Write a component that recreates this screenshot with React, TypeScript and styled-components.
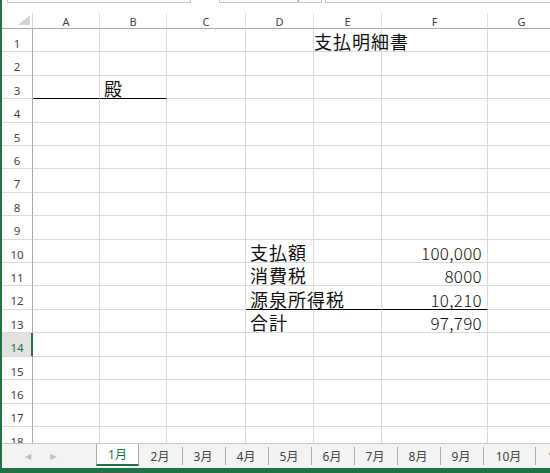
import React from 'react'
import styled, { createGlobalStyle } from 'styled-components'

const GlobalStyle = createGlobalStyle`
	html, body {
		margin: 0;
		padding: 0;
		background: #ffffff;
	}
`

const COLS = ['A', 'B', 'C', 'D', 'E', 'F', 'G']
const COL_WIDTHS = [67, 67, 79, 68, 68, 106, 68]
const ROW_COUNT = 18
const ROW_H = 23.42
const SELECTED_ROW = 14

type CellData = { text: string; align?: 'left' | 'right'; kind?: 'title' | 'label' | 'num' }

const cells: Record<string, CellData> = {
	E1: { text: '支払明細書', kind: 'title' },
	B3: { text: '殿', kind: 'label' },
	D10: { text: '支払額', kind: 'label' },
	F10: { text: '100,000', align: 'right', kind: 'num' },
	D11: { text: '消費税', kind: 'label' },
	F11: { text: '8000', align: 'right', kind: 'num' },
	D12: { text: '源泉所得税', kind: 'label' },
	F12: { text: '10,210', align: 'right', kind: 'num' },
	D13: { text: '合計', kind: 'label' },
	F13: { text: '97,790', align: 'right', kind: 'num' },
}

const underlined = new Set(['A3', 'B3', 'D12', 'E12', 'F12'])

const tabs = ['1月', '2月', '3月', '4月', '5月', '6月', '7月', '8月', '9月', '10月', '11月']

const App = () => {
	const rows = Array.from({ length: ROW_COUNT }, (_, i) => i + 1)

	return (
		<Root>
			<GlobalStyle />
			<TopStrip>
				<NameBox />
				<FnBox>
					<FnGlyph>ƒ</FnGlyph>
				</FnBox>
				<FormulaBox />
			</TopStrip>
			<Sheet>
				<Grid>
					<Corner>
						<svg width="12" height="10" viewBox="0 0 12 10">
							<polygon points="12,0 12,10 0,10" fill="#d6d6d6" />
						</svg>
					</Corner>
					{COLS.map(c => (
						<ColHead key={c}>{c}</ColHead>
					))}
					{rows.map(r => (
						<React.Fragment key={r}>
							<RowHead $selected={r === SELECTED_ROW}>{r}</RowHead>
							{COLS.map(c => {
								const id = `${c}${r}`
								const data = cells[id]
								return (
									<Cell key={id} $underline={underlined.has(id)} $align={data?.align ?? 'left'}>
										{data && <CellText $kind={data.kind ?? 'label'}>{data.text}</CellText>}
									</Cell>
								)
							})}
						</React.Fragment>
					))}
				</Grid>
			</Sheet>
			<TabBar>
				<NavArrows>
					<Arrow>◀</Arrow>
					<Arrow>▶</Arrow>
				</NavArrows>
				{tabs.map((t, i) => (
					<Tab key={t} $active={i === 0} $wide={t.length > 2}>
						{t}
					</Tab>
				))}
			</TabBar>
			<StatusBar />
		</Root>
	)
}

export default App

const Root = styled.div`
	width: 550px;
	height: 473px;
	box-sizing: border-box;
	border-left: 2px solid #217346;
	display: flex;
	flex-direction: column;
	overflow: hidden;
	background: #ffffff;
`

const TopStrip = styled.div`
	height: 13px;
	flex-shrink: 0;
	display: flex;
	align-items: flex-start;
`

const TopBox = styled.div`
	height: 3px;
	box-sizing: border-box;
	border: 1px solid #c6c6c6;
	border-top: none;
	background: #ffffff;
`

const NameBox = styled(TopBox)`
	margin-left: 5px;
	width: 184px;
`

const FnBox = styled(TopBox)`
	margin-left: 28px;
	width: 103px;
	position: relative;
	overflow: hidden;
`

const FnGlyph = styled.span`
	position: absolute;
	left: 76px;
	top: -12px;
	font-family: 'Liberation Serif', serif;
	font-size: 14px;
	color: #888;
`

const FormulaBox = styled(TopBox)`
	margin-left: 3px;
	flex: 1;
	border-right: none;
`

const Sheet = styled.div`
	flex: 1;
	overflow: hidden;
	background: #ffffff;
`

const Grid = styled.div`
	display: grid;
	grid-template-columns: 31px ${COL_WIDTHS.map(w => `${w}px`).join(' ')};
	grid-template-rows: 16px repeat(${ROW_COUNT}, ${ROW_H}px);
	width: max-content;
`

const Corner = styled.div`
	box-sizing: border-box;
	border-right: 1px solid #dadada;
	border-bottom: 1px solid #ababab;
	display: flex;
	align-items: flex-end;
	justify-content: flex-end;
	padding: 0 2px 3px 0;
`

const ColHead = styled.div`
	box-sizing: border-box;
	border-right: 1px solid #e1e1e1;
	border-bottom: 1px solid #ababab;
	display: flex;
	align-items: center;
	justify-content: center;
	font-family: 'Segoe UI', 'Noto Sans', sans-serif;
	font-size: 11px;
	color: #444444;
	padding-top: 1px;
`

const RowHead = styled.div<{ $selected: boolean }>`
	box-sizing: border-box;
	border-bottom: 1px solid #dadada;
	border-right: ${p => (p.$selected ? '2px solid #217346' : '1px solid #ababab')};
	background: ${p => (p.$selected ? '#e1e1e1' : '#ffffff')};
	color: ${p => (p.$selected ? '#217346' : '#444444')};
	display: flex;
	align-items: flex-end;
	justify-content: center;
	padding-bottom: 2px;
	padding-left: ${p => (p.$selected ? '1px' : '0')};
	font-family: 'Segoe UI', 'Noto Sans', sans-serif;
	font-size: 11.5px;
	line-height: 1;
`

const Cell = styled.div<{ $underline: boolean; $align: 'left' | 'right' }>`
	box-sizing: border-box;
	border-right: 1px solid #dadada;
	border-bottom: 1px solid ${p => (p.$underline ? '#000000' : '#dadada')};
	display: flex;
	align-items: flex-end;
	justify-content: ${p => (p.$align === 'right' ? 'flex-end' : 'flex-start')};
	padding: ${p => (p.$align === 'right' ? '0 5px 0 0' : '0 0 0 4px')};
	white-space: nowrap;
	overflow: visible;
	min-width: 0;
`

const CellText = styled.span<{ $kind: 'title' | 'label' | 'num' }>`
	font-family: 'Noto Sans CJK JP', sans-serif;
	font-size: ${p => (p.$kind === 'num' ? '17px' : '18px')};
	font-weight: ${p => (p.$kind === 'num' ? 300 : 400)};
	line-height: 1;
	color: #111111;
	margin-left: ${p => (p.$kind === 'title' ? '-4px' : '0')};
	padding-bottom: 1px;
	letter-spacing: ${p => (p.$kind === 'num' ? '0.3px' : '1px')};
`

const TabBar = styled.div`
	height: 25px;
	flex-shrink: 0;
	box-sizing: border-box;
	border-top: 1px solid #c6c6c6;
	background: #f3f3f3;
	display: flex;
	align-items: stretch;
	overflow: hidden;
`

const NavArrows = styled.div`
	width: 94px;
	flex-shrink: 0;
	display: flex;
	align-items: center;
	gap: 19px;
	padding-left: 23px;
	box-sizing: border-box;
`

const Arrow = styled.span`
	font-size: 8px;
	color: #c0c0c0;
	font-family: 'DejaVu Sans', sans-serif;
`

const Tab = styled.div<{ $active: boolean; $wide: boolean }>`
	width: ${p => (p.$wide ? '52px' : '43px')};
	flex-shrink: 0;
	box-sizing: border-box;
	display: flex;
	align-items: center;
	justify-content: center;
	position: relative;
	font-family: 'Segoe UI', 'Noto Sans', 'Noto Sans CJK JP', sans-serif;
	font-size: 12px;
	color: ${p => (p.$active ? '#217346' : '#444444')};
	background: ${p => (p.$active ? '#ffffff' : 'transparent')};
	margin-top: ${p => (p.$active ? '-1px' : '0')};
	border-left: ${p => (p.$active ? '1px solid #ababab' : 'none')};
	border-right: 1px solid ${p => (p.$active ? '#ababab' : 'transparent')};
	border-bottom: ${p => (p.$active ? '2px solid #217346' : 'none')};
	height: ${p => (p.$active ? '23px' : 'auto')};

	&:nth-child(n + 4)::before {
		content: '';
		position: absolute;
		left: 0;
		top: 3px;
		bottom: 3px;
		border-left: 1px solid #ababab;
	}
`

const StatusBar = styled.div`
	height: 5px;
	flex-shrink: 0;
	background: #217346;
`
